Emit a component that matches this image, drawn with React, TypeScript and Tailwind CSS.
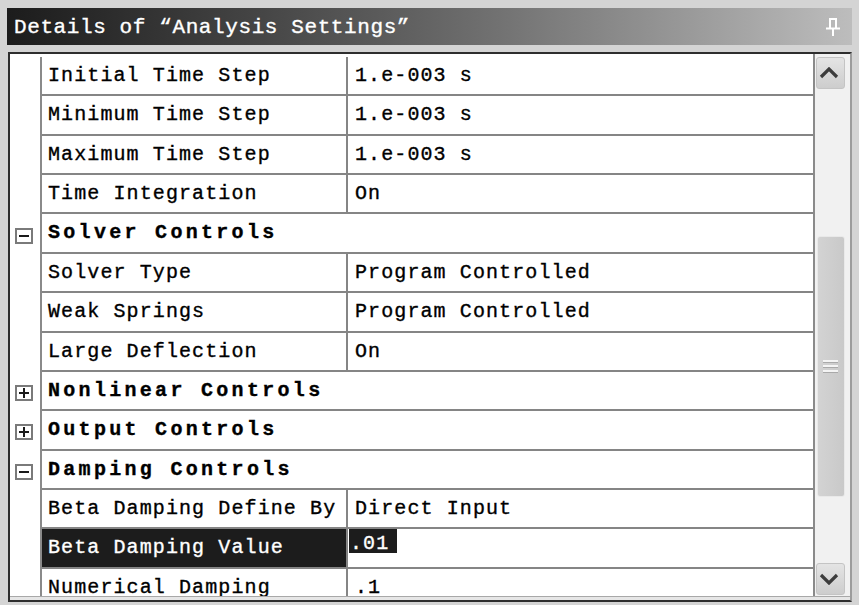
import React from 'react';

type Row =
  | { kind: 'prop'; label: string; value: string; selected?: boolean }
  | { kind: 'group'; label: string; open: boolean };

const rows: Row[] = [
  { kind: 'prop', label: 'Initial Time Step', value: '1.e-003 s' },
  { kind: 'prop', label: 'Minimum Time Step', value: '1.e-003 s' },
  { kind: 'prop', label: 'Maximum Time Step', value: '1.e-003 s' },
  { kind: 'prop', label: 'Time Integration', value: 'On' },
  { kind: 'group', label: 'Solver Controls', open: true },
  { kind: 'prop', label: 'Solver Type', value: 'Program Controlled' },
  { kind: 'prop', label: 'Weak Springs', value: 'Program Controlled' },
  { kind: 'prop', label: 'Large Deflection', value: 'On' },
  { kind: 'group', label: 'Nonlinear Controls', open: false },
  { kind: 'group', label: 'Output Controls', open: false },
  { kind: 'group', label: 'Damping Controls', open: true },
  { kind: 'prop', label: 'Beta Damping Define By', value: 'Direct Input' },
  { kind: 'prop', label: 'Beta Damping Value', value: '.01', selected: true },
  { kind: 'prop', label: 'Numerical Damping', value: '.1' },
];

const Toggle: React.FC<{ open: boolean }> = ({ open }) => (
  <div className="w-[18px] h-[16px] shrink-0 border-2 border-[#7a7a7a] bg-white relative">
    <div className="absolute left-[2px] top-[5px] w-[10px] h-[2px] bg-[#1a1a1a]" />
    {!open && <div className="absolute left-[6px] top-[1px] w-[2px] h-[10px] bg-[#1a1a1a]" />}
  </div>
);

const Chevron: React.FC<{ up?: boolean }> = ({ up }) => (
  <svg width="20" height="12" viewBox="0 0 20 12">
    <polyline
      points={up ? '2,10 10,2 18,10' : '2,2 10,10 18,2'}
      fill="none"
      stroke="#3c3c3c"
      strokeWidth="3.2"
    />
  </svg>
);

const ScrollButton: React.FC<{ up?: boolean; className?: string }> = ({ up, className }) => (
  <div
    className={`ml-[1px] w-[29px] h-[32px] shrink-0 rounded-[3px] border border-[#c4c4c4] bg-gradient-to-b from-[#e4e4e4] to-[#cdcdcd] flex items-center justify-center pr-[3px] ${className ?? ''}`}
  >
    <Chevron up={up} />
  </div>
);

const PropRow: React.FC<{ row: Row }> = ({ row }) => (
  <div className="flex h-[39.36px] shrink-0">
    {/* tree gutter */}
    <div className="w-[32px] shrink-0 border-r-2 border-[#8a8a8a] bg-white flex items-center pl-[5px] pt-[3px]">
      {row.kind === 'group' && <Toggle open={row.open} />}
    </div>
    {row.kind === 'group' ? (
      <div className="flex-1 border-b-2 border-[#858585] pl-[6px] leading-[37px] font-bold tracking-[3.3px] text-black">
        {row.label}
      </div>
    ) : (
      <>
        <div
          className={`w-[306px] shrink-0 border-r-2 border-b-2 border-[#858585] pl-[6px] leading-[37px] whitespace-nowrap tracking-[1.1px] ${
            row.selected ? 'bg-[#1c1c1c] text-white' : 'text-black'
          }`}
        >
          {row.label}
        </div>
        <div className="flex-1 border-b-2 border-[#858585] pl-[7px] leading-[37px] tracking-[1.1px] text-black whitespace-nowrap">
          {row.selected ? (
            <span className="-ml-[6px] inline-block align-top h-[24px] pt-[6px] leading-[17px] pl-[1px] pr-[8px] bg-[#1c1c1c] text-white">
              {row.value}
            </span>
          ) : (
            row.value
          )}
        </div>
      </>
    )}
  </div>
);

export default function App() {
  return (
    <div
      className="w-[859px] h-[605px] bg-[#d4d4d4] pt-[8px] pl-[7px] pr-[7px] pb-[3px] flex flex-col overflow-hidden text-[20px] [-webkit-text-stroke:0.35px_currentColor]"
      style={{ fontFamily: '"Liberation Mono", "DejaVu Sans Mono", monospace' }}
    >
      {/* Title bar */}
      <div className="h-[37px] shrink-0 bg-gradient-to-r from-[#1c1c1c] via-[#646464] to-[#bdbdbd] flex items-center justify-between pl-[7px] pr-[11px] pt-[3px]">
        <span className="text-white text-[21px] tracking-[0.6px] whitespace-nowrap">
          Details of “Analysis Settings”
        </span>
        <svg width="16" height="18" viewBox="0 0 16 18" className="-mt-[3px]">
          <g fill="none" stroke="#ffffff" strokeWidth="2">
            <line x1="4" y1="1" x2="12" y2="1" />
            <line x1="5" y1="1" x2="5" y2="10" />
            <line x1="11" y1="1" x2="11" y2="10" />
            <line x1="1" y1="10.5" x2="15" y2="10.5" />
            <line x1="8" y1="11" x2="8" y2="18" />
          </g>
        </svg>
      </div>

      {/* Details panel */}
      <div className="mt-[7px] ml-[1px] flex-1 min-h-0 flex flex-col border-l-2 border-t-2 border-b-2 border-r-2 border-[#2e2e2e] border-r-[#9c9c9c] bg-white">
        <div className="flex-1 min-h-0 flex">
          <div className="w-[805px] shrink-0 border-r-2 border-[#8a8a8a] pt-[3px] flex flex-col overflow-hidden">
            {rows.map((r, i) => (
              <PropRow key={i} row={r} />
            ))}
          </div>

          {/* Scrollbar */}
          <div className="flex-1 bg-[#f1f1f1] flex flex-col overflow-hidden">
            <ScrollButton up className="mt-[3px]" />
            <div className="mt-[147px] ml-[2px] w-[28px] h-[261px] shrink-0 rounded-[3px] border border-[#e9e9e9] bg-gradient-to-r from-[#d3d3d3] to-[#c9c9c9] flex items-center justify-center">
              <div className="flex flex-col gap-[2px] -ml-[2px]">
                <div className="w-[15px] h-[3px] bg-[#f4f4f4] border-b border-[#a9a9a9]" />
                <div className="w-[15px] h-[3px] bg-[#f4f4f4] border-b border-[#a9a9a9]" />
                <div className="w-[15px] h-[3px] bg-[#f4f4f4] border-b border-[#a9a9a9]" />
              </div>
            </div>
            <ScrollButton className="mt-[66px]" />
          </div>
        </div>
        {/* bottom edge of the grid */}
        <div className="h-[4px] shrink-0 border-t border-[#a8a8a8] bg-[#e6e6e6]" />
      </div>
    </div>
  );
}
